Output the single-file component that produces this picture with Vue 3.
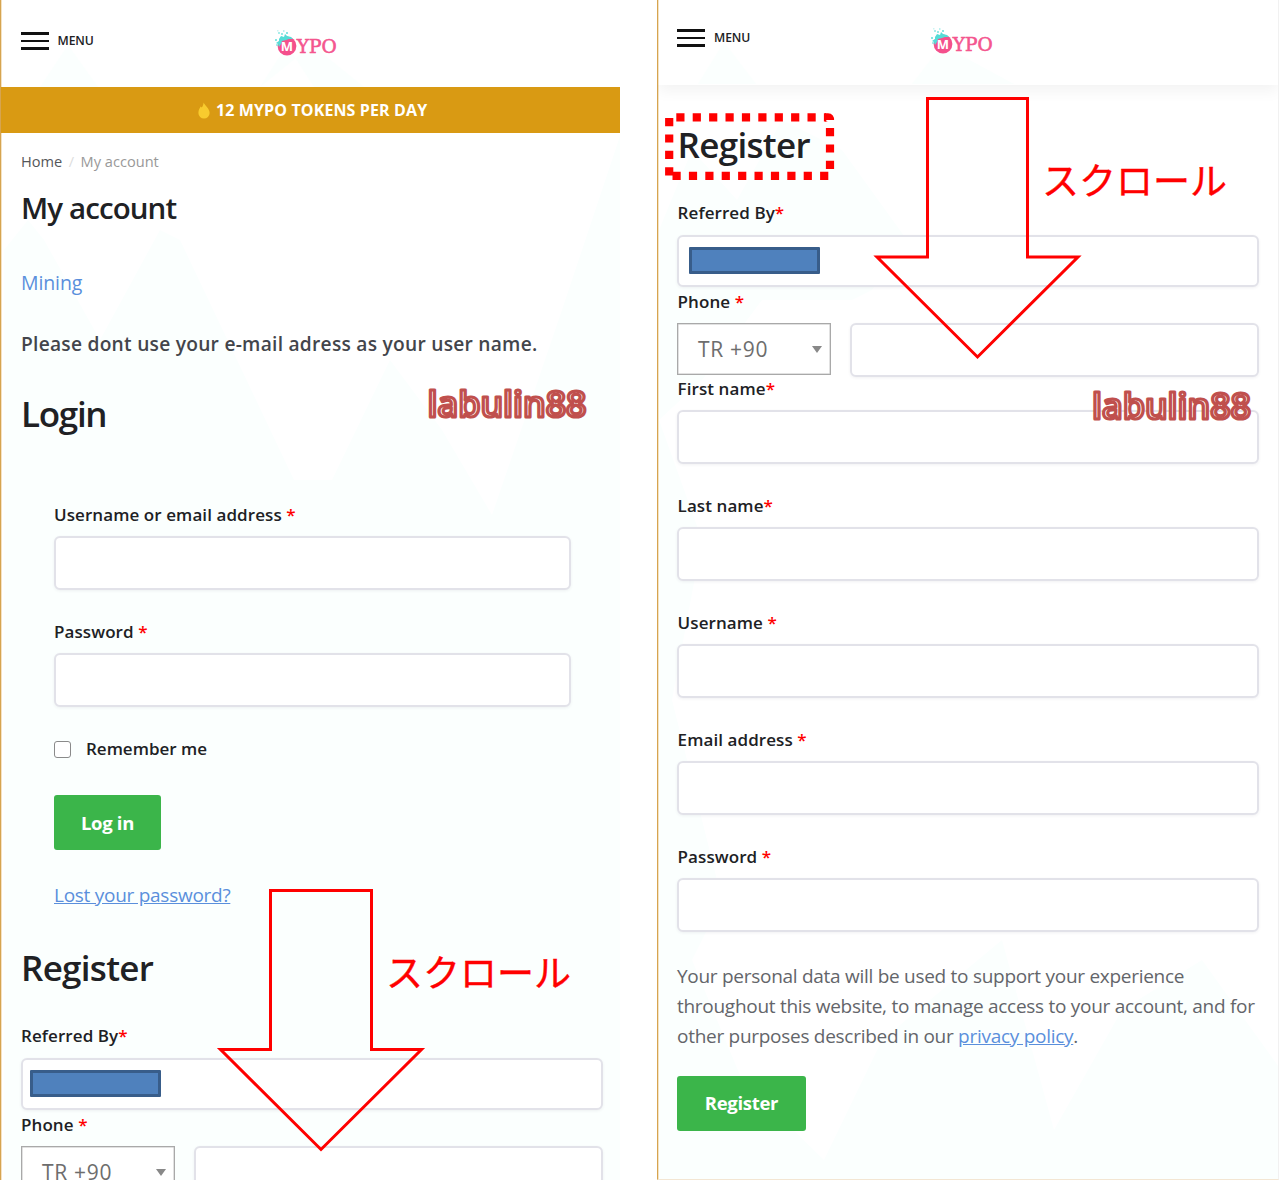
<template>
  <div class="stage">
    <section class="phone left">
      <svg class="backdrop" width="620" height="1180" viewBox="0 0 620 1180">
        <polygon v-for="p in leftPeaks" :key="p" :points="p" />
      </svg>
      <header class="top">
        <button class="menu"><i></i><i></i><i></i></button>
        <span class="menu-text">MENU</span>
        <svg class="logo" width="66" height="32" viewBox="0 0 66 32">
          <use href="#mypo" />
        </svg>
      </header>
      <div class="banner">
        <svg width="12" height="17" viewBox="0 0 12 17">
          <path d="M5.6 .5C6.4 3 11.6 6.500 11.600 11A5.600 5.500 0 0 1 .4 11C.4 7.500 2 6.500 2.600 4.600L3.800 5.600C4.800 4 5.400 2.500 5.600 .5Z" fill="#f8cb2e" />
        </svg>
        <strong>12 MYPO TOKENS PER DAY</strong>
      </div>
      <nav class="crumbs"><a>Home</a><span class="sep">/</span><span class="here">My account</span></nav>
      <h1>My account</h1>
      <a class="mining">Mining</a>
      <p class="notice">Please dont use your e-mail adress as your user name.</p>
      <h2 class="h-login">Login</h2>
      <form class="login">
        <div v-for="f in loginFields" :key="f" class="field">
          <label>{{ f }} <em>*</em></label>
          <div class="input"></div>
        </div>
        <div class="remember"><span class="check"></span><b>Remember me</b></div>
        <div class="btn b-login">Log in</div>
        <a class="lost">Lost your password?</a>
      </form>
      <h2 class="h-register">Register</h2>
      <div class="field referred">
        <label>Referred By<em>*</em></label>
        <div class="input"><span class="mask"></span></div>
      </div>
      <div class="field">
        <label>Phone <em>*</em></label>
        <div class="tel">
          <div class="select"><span>TR +90</span><i></i></div>
          <div class="input"></div>
        </div>
      </div>
    </section>

    <section class="phone right">
      <svg class="backdrop" width="622" height="1180" viewBox="657 0 622 1180">
        <polygon v-for="p in rightPeaks" :key="p" :points="p" />
      </svg>
      <header class="top">
        <button class="menu"><i></i><i></i><i></i></button>
        <span class="menu-text">MENU</span>
        <svg class="logo" width="66" height="32" viewBox="0 0 66 32">
          <use href="#mypo" />
        </svg>
      </header>
      <h2 class="h-register">Register</h2>
      <div class="field referred">
        <label>Referred By<em>*</em></label>
        <div class="input"><span class="mask"></span></div>
      </div>
      <div class="field phone-field">
        <label>Phone <em>*</em></label>
        <div class="tel">
          <div class="select"><span>TR +90</span><i></i></div>
          <div class="input"></div>
        </div>
      </div>
      <div v-for="f in registerFields" :key="f.label" class="field">
        <label>{{ f.label }}<template v-if="f.space">&nbsp;</template><em>*</em></label>
        <div class="input"></div>
      </div>
      <p class="privacy">
        Your personal data will be used to support your experience<br>
        throughout this website, to manage access to your account, and for<br>
        other purposes described in our <a>privacy policy</a>.
      </p>
      <div class="btn b-register">Register</div>
    </section>

    <!-- annotations over both screens -->
    <svg class="notes" width="1280" height="1180" viewBox="0 0 1280 1180">
      <defs>
        <g id="mypo">
          <circle cx="12" cy="18" r="9.400" fill="#f4508c" />
          <g fill="#55dcd6">
            <path d="M4 11L6 8 9 9 10 6 12 8 16 9 18 11 14 11 11 12 7 13 6 16 4 19 3 16 1 15 4 13Z" />
            <rect x="3" y="4" width="2" height="2" opacity=".5" />
            <rect x="6" y="5" width="2" height="2" opacity=".6" />
            <rect x="8" y="2" width="1.500" height="2" opacity=".4" />
            <rect x="11" y="4" width="2" height="2" opacity=".7" />
            <rect x="0" y="11" width="2" height="2" opacity=".7" />
            <rect x="2" y="2" width="1.500" height="1.500" opacity=".3" />
            <rect x="1" y="16" width="2" height="2" opacity=".5" />
          </g>
          <text x="12" y="22.800" text-anchor="middle" class="logo-m">M</text>
          <text x="21.800" y="24.600" textLength="40" lengthAdjust="spacingAndGlyphs" class="logo-t">YPO</text>
        </g>
      </defs>
      <g class="arrow">
        <path d="M927.500 98.500H1027.500V257H1078L977.500 357 877 257H927.500Z" />
        <path d="M270.500 890.500H371.500V1049.500H421.500L321 1149.500 220.500 1049.500H270.500Z" />
      </g>
      <g class="dots">
        <path d="M676.300 117.300H826" />
        <path d="M825 117.300H828Q830 117.300 830 120" stroke-dasharray="none" />
        <path d="M830 128V170" />
        <path d="M672.500 175.800H830" />
        <path d="M669.200 118V176" />
      </g>
      <g class="scroll">
        <text x="1042" y="194.500" textLength="185">スクロール</text>
        <text x="386" y="986.500" textLength="185">スクロール</text>
      </g>
      <g class="mark">
        <text x="427.500" y="417" textLength="159" lengthAdjust="spacingAndGlyphs">labulin88</text>
        <text x="1092" y="419" textLength="159" lengthAdjust="spacingAndGlyphs">labulin88</text>
      </g>
    </svg>
  </div>
</template>

<script setup>
const loginFields = ['Username or email address', 'Password'];

const registerFields = [
  { label: 'First name', space: false },
  { label: 'Last name', space: false },
  { label: 'Username', space: true },
  { label: 'Email address', space: true },
  { label: 'Password', space: true },
];

// pale mountain shapes behind each screen
const leftPeaks = [
  '38,87 66,45 96,87',
  '258,87 285,45 312,87 362,87 310,45',
  '2,250 26,220 42,240 98,340 158,230 178,240 292,480 330,480 388,360 440,430 490,515 560,310 620,130 620,1180 2,1180',
];
const rightPeaks = [
  '696,84 722,42 754,84',
  '910,84 940,45 1012,84',
  '657,230 690,150 735,200 780,120 840,150 905,240 870,290 850,300 760,300 700,380 657,420',
  '657,420 700,540 670,700 720,900 690,960 740,1080 822,1160 880,1040 1000,940 1052,1130 1120,1010 1200,960 1279,1070 1279,1180 657,1180',
  '1205,462 1235,420 1255,462',
];
</script>

<style>
body {
  background: #fff;
}
</style>

<style scoped>
* {
  box-sizing: border-box;
}
.stage {
  position: relative;
  display: flex;
  gap: 37px;
  width: 1280px;
  height: 1180px;
  overflow: hidden;
  background: #fff;
  font-family: "Open Sans", "Noto Sans", sans-serif;
  color: #202124;
}
.phone {
  position: relative;
  height: 1180px;
  overflow: hidden;
  border-left: 1px solid #d6a450;
  box-shadow: inset 1px 0 #f4e3c4;
}
.left {
  width: 620px;
  padding-left: 20px;
  padding-right: 17px;
}
.right {
  width: 622px;
  padding-left: 19px;
  padding-right: 19px;
  border-bottom: 1px solid #f3e6d3;
  border-right: 1px solid #f1f1f1;
}
.backdrop {
  position: absolute;
  left: 1px;
  top: 0;
  fill: #fbfffe;
}
.phone > :not(.backdrop) { position: relative; }

.top {
  display: flex;
  align-items: flex-start;
  height: 87px;
  padding-top: 32px;
}
.right .top {
  height: 85px;
  padding-top: 29px;
  margin: 0 -19px;
  padding-left: 19px;
  box-shadow: 0 6px 14px rgba(0, 0, 0, 0.05);
}
.menu {
  display: flex;
  flex-direction: column;
  gap: 5px;
  width: 28px;
  margin: 0;
  padding: 0;
  border: 0;
  background: none;
}
.menu i {
  height: 2.700px;
  background: #111;
}
.left .menu { margin-left: -0.500px; }
.menu-text {
  width: 36px;
  margin-left: 9px;
  line-height: 18px;
  font-size: 12.200px;
  font-weight: 600;
  letter-spacing: -0.100px;
}
.logo { margin: -4px 0 0 181px; overflow: visible; }
.right .logo { margin-top: -3.400px; }
.logo-m {
  font: bold 13px "Open Sans", sans-serif;
  fill: #fff;
}
.logo-t {
  font: 18.500px "DejaVu Serif", serif;
  fill: #f4568f;
  stroke: #f4568f;
  stroke-width: 0.600;
}

.banner {
  display: flex;
  align-items: center;
  gap: 6px;
  height: 46px;
  margin: 0 -17px 0 -20px;
  padding-left: 197px;
  background: #d99a13;
  color: #fff;
  font-size: 16px;
}
.banner strong { font-weight: 700; letter-spacing: 0.120px; }

.crumbs {
  height: 24px;
  margin-top: 16px;
  line-height: 24px;
  font-size: 14.600px;
  color: #54565a;
}
.sep { margin: 0 6.500px; color: #ddd; }
.here { color: #999; }

h1, h2 { margin: 0; font-weight: 600; }
h1 {
  height: 40px;
  margin-top: 15px;
  line-height: 40px;
  font-size: 29.500px;
  letter-spacing: -0.900px;
}
h2 {
  height: 46px;
  line-height: 46px;
  font-size: 35px;
  letter-spacing: -0.700px;
}
.mining {
  display: block;
  height: 28px;
  margin-top: 40px;
  line-height: 30px;
  font-size: 19.500px;
  letter-spacing: -0.100px;
  color: #5a8fdc;
}
.notice {
  height: 28px;
  margin: 34px 0 0;
  line-height: 28px;
  font-size: 19.200px;
  font-weight: 600;
  letter-spacing: 0.250px;
  color: #43454b;
  white-space: nowrap;
}
.h-login {
  margin-top: 33px;
  letter-spacing: -1.300px;
}
.login {
  margin: 65px 32px 0 33px;
}
.left .h-register { margin-top: 36px; }
.left .referred { margin-top: 33px; }
.right .h-register { margin-top: 37px; padding-left: 0.600px; }
.right .referred { margin-top: 33px; }

.field { margin-bottom: 29px; }
.field.referred { margin-bottom: 2px; }
.field.phone-field { margin-bottom: 0; }
label {
  display: block;
  height: 34px;
  line-height: 26px;
  font-size: 17px;
  font-weight: 600;
  letter-spacing: 0.080px;
}
.right label { padding-left: 0.600px; }
.referred label { line-height: 24px; }
em {
  color: #f00;
  font-style: normal;
}
.input {
  height: 54px;
  border: 2px solid #e2e2e9;
  border-radius: 6px;
  background: #fff;
  box-shadow: 0 1px 3px rgba(60, 60, 80, 0.07);
}
.referred .input { height: 52px; padding: 10px 0 0 10px; }
.left .referred .input { padding-left: 7px; }
.mask {
  display: block;
  width: 131px;
  height: 27px;
  border: 3px solid #385d8a;
  border-radius: 1px;
  background: #4f81bd;
}
.tel {
  display: flex;
  align-items: flex-start;
  gap: 19px;
  height: 53px;
}
.tel .input { flex: 1; }
.select {
  display: flex;
  align-items: center;
  justify-content: space-between;
  width: 154px;
  height: 52px;
  padding: 0 8px 0 20px;
  border: 1px solid #a9a9a9;
  box-shadow: inset 0 0 0 0.500px #c4c4c4;
  background: #fff;
  font-size: 21px;
  letter-spacing: 0.700px;
  color: #6d6d6d;
}
.select i {
  border: 5.500px solid transparent;
  border-top: 7px solid #888;
  border-bottom: 0;
}

.remember {
  display: flex;
  align-items: center;
  gap: 15px;
  height: 26px;
  font-size: 17px;
}
.remember b { font-weight: 600; line-height: 24px; }
.check {
  width: 17px;
  height: 17px;
  border: 1.500px solid #8a8a8a;
  border-radius: 3px;
  background: #fff;
}
.btn {
  display: flex;
  align-items: center;
  justify-content: center;
  height: 55px;
  border-radius: 3px;
  background: #3bb54a;
  color: #fff;
  font-size: 18.500px;
  font-weight: 700;
  letter-spacing: -0.300px;
}
.b-login { width: 107px; margin-top: 33px; }
.b-register { width: 129px; margin-top: 24px; padding-bottom: 2px; }
.lost {
  display: block;
  height: 28px;
  margin-top: 31px;
  line-height: 28px;
  font-size: 19px;
  letter-spacing: -0.270px;
  color: #5a8fdc;
  text-decoration: underline;
}
.privacy {
  height: 91px;
  margin: 0;
  line-height: 30.100px;
  font-size: 19px;
  letter-spacing: -0.280px;
  color: #63656a;
  white-space: nowrap;
}
.privacy a { color: #5a8fdc; text-decoration: underline; }

.notes {
  position: absolute;
  left: 0;
  top: 0;
}
.arrow {
  fill: none;
  stroke: #f00;
  stroke-width: 3;
}
.dots {
  fill: none;
  stroke: #f00;
  stroke-width: 8.200;
  stroke-dasharray: 8.200 8.200;
}
.scroll {
  font-family: "Noto Sans CJK JP", sans-serif;
  font-size: 37px;
  fill: #f00;
  stroke: #f00;
  stroke-width: 0.400;
}
.mark {
  font-family: "Open Sans", sans-serif;
  font-size: 36px;
  font-weight: 600;
  fill: #fff;
  stroke: #c0504d;
  stroke-width: 3.200;
  stroke-linejoin: round;
}
</style>
